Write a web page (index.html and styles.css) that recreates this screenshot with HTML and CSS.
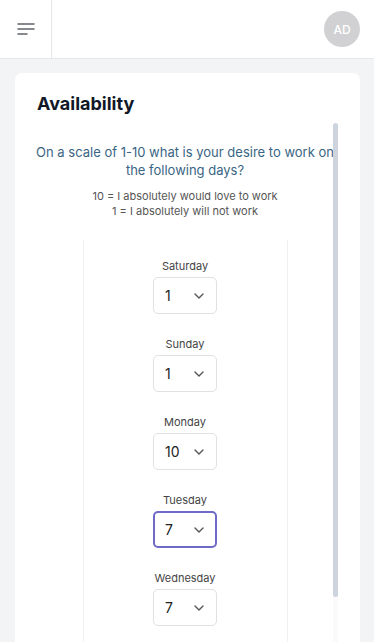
FILE: index.html
```html
<!DOCTYPE html>
<html lang="en">
<head>
<meta charset="utf-8">
<title>Availability</title>
<link rel="stylesheet" href="styles.css">
</head>
<body>
<header class="topbar">
  <div class="menu-cell">
    <svg class="menu-icon" width="18" height="12" viewBox="0 0 18 12" fill="none" stroke="#5f6368" stroke-width="1.5" stroke-linecap="round">
      <line x1="1" y1="1" x2="17" y2="1"/>
      <line x1="1" y1="6" x2="17" y2="6"/>
      <line x1="1" y1="11" x2="10" y2="11"/>
    </svg>
  </div>
  <div class="top-right">
    <div class="avatar">AD</div>
  </div>
</header>
<main class="page">
  <section class="card">
    <h1 class="card-title">Availability</h1>
    <div class="scroller">
      <div class="scroll-content">
        <p class="question">On a scale of 1-10 what is your desire to work on the following days?</p>
        <p class="legend">10 = I absolutely would love to work<br>1 = I absolutely will not work</p>
        <div class="days">
          <div class="day">
            <div class="day-label">Saturday</div>
            <div class="select"><span class="val">1</span><svg class="chev" width="10" height="6" viewBox="0 0 10 6" fill="none" stroke="#555" stroke-width="1.4" stroke-linecap="round" stroke-linejoin="round"><polyline points="1,1 5,5 9,1"/></svg></div>
          </div>
          <div class="day">
            <div class="day-label">Sunday</div>
            <div class="select"><span class="val">1</span><svg class="chev" width="10" height="6" viewBox="0 0 10 6" fill="none" stroke="#555" stroke-width="1.4" stroke-linecap="round" stroke-linejoin="round"><polyline points="1,1 5,5 9,1"/></svg></div>
          </div>
          <div class="day">
            <div class="day-label">Monday</div>
            <div class="select"><span class="val">10</span><svg class="chev" width="10" height="6" viewBox="0 0 10 6" fill="none" stroke="#555" stroke-width="1.4" stroke-linecap="round" stroke-linejoin="round"><polyline points="1,1 5,5 9,1"/></svg></div>
          </div>
          <div class="day">
            <div class="day-label">Tuesday</div>
            <div class="select focused"><span class="val">7</span><svg class="chev" width="10" height="6" viewBox="0 0 10 6" fill="none" stroke="#555" stroke-width="1.4" stroke-linecap="round" stroke-linejoin="round"><polyline points="1,1 5,5 9,1"/></svg></div>
          </div>
          <div class="day">
            <div class="day-label">Wednesday</div>
            <div class="select"><span class="val">7</span><svg class="chev" width="10" height="6" viewBox="0 0 10 6" fill="none" stroke="#555" stroke-width="1.4" stroke-linecap="round" stroke-linejoin="round"><polyline points="1,1 5,5 9,1"/></svg></div>
          </div>
        </div>
      </div>
      <div class="scrollbar"><div class="thumb"></div></div>
    </div>
  </section>
</main>
</body>
</html>
```

FILE: styles.css
```css
* { box-sizing: border-box; }
html, body { margin: 0; padding: 0; }
body {
  font-family: Inter, "Noto Sans", sans-serif;
  background: #f3f4f6;
  height: 642px;
  overflow: hidden;
}
.topbar {
  height: 59px;
  background: #fff;
  border-bottom: 1px solid #e6e7ea;
  display: flex;
}
.menu-cell {
  width: 52px;
  border-right: 1px solid #e6e7ea;
  display: flex;
  align-items: center;
  justify-content: center;
}
.menu-icon { display: block; margin-top: -1px; }
.top-right {
  flex: 1;
  display: flex;
  justify-content: flex-end;
  align-items: center;
  padding-right: 14px;
}
.avatar {
  width: 36px;
  height: 36px;
  border-radius: 50%;
  background: #d1d1d3;
  color: #fff;
  font-size: 12px;
  font-weight: 500;
  display: flex;
  align-items: center;
  justify-content: center;
}
.page {
  padding: 14px 14px 0 15px;
}
.card {
  background: #fff;
  border-radius: 7px;
  padding: 20px 22px 0 22px;
  height: 700px;
}
.card-title {
  margin: 0;
  font-size: 18px;
  line-height: 22px;
  font-weight: 700;
  color: #111827;
}
.scroller {
  margin-top: 8px;
  height: 576px;
  display: flex;
}
.scroll-content {
  flex: 1;
  min-width: 0;
  text-align: center;
  padding-top: 20px;
}
.scrollbar {
  width: 5px;
  background: #fafafb;
  border-radius: 3px;
}
.thumb {
  height: 474px;
  background: #cdd4de;
  border-radius: 3px;
}
.question {
  margin: 0 -6px;
  font-size: 13px;
  line-height: 18px;
  color: #3a6584;
}
.legend {
  margin: 10px 0 0;
  font-size: 11px;
  line-height: 15px;
  color: #555;
}
.days {
  width: 205px;
  margin: 21px auto 0;
  border-left: 1px solid #f1f1f2;
  border-right: 1px solid #f1f1f2;
  padding: 19px 0 40px;
  display: flex;
  flex-direction: column;
  align-items: center;
  gap: 23px;
}
.day {
  display: flex;
  flex-direction: column;
  align-items: center;
  gap: 4px;
}
.day-label {
  font-size: 11px;
  line-height: 14px;
  color: #444;
}
.select {
  width: 64px;
  height: 37px;
  border: 1px solid #e1e1e3;
  border-radius: 5px;
  display: flex;
  align-items: center;
  justify-content: space-between;
  padding: 0 12px 0 11px;
}
.select.focused {
  border: 2px solid #6e6ac6;
  padding: 0 11px 0 10px;
}
.val {
  font-size: 14px;
  color: #222;
}
.chev { display: block; }
```
